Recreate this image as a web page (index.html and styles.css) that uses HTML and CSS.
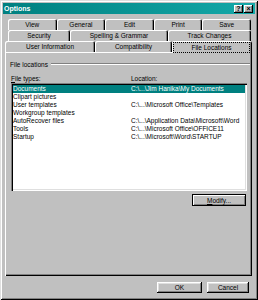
FILE: index.html
```html
<!DOCTYPE html>
<html lang="en">
<head>
  <meta charset="UTF-8">
  <meta name="viewport" content="width=device-width, initial-scale=1.0">
  <title>Options</title>
  <link rel="stylesheet" href="styles.css">
</head>
<body>

  <div class="window">
    <div class="titlebar">
      <span class="title">Options</span>
      <div class="title-buttons">
        <span class="tbtn">?</span>
        <span class="tbtn">×</span>
      </div>
    </div>

    <div class="content">
      <div class="tabs">
        <div class="tab-row back">
          <div class="tab">View</div>
          <div class="tab">General</div>
          <div class="tab">Edit</div>
          <div class="tab">Print</div>
          <div class="tab">Save</div>
        </div>
        <div class="tab-row back">
          <div class="tab w-security">Security</div>
          <div class="tab w-spelling">Spelling &amp; Grammar</div>
          <div class="tab w-track">Track Changes</div>
        </div>
        <div class="tab-row front">
          <div class="tab w-user">User Information</div>
          <div class="tab w-compat">Compatibility</div>
          <div class="tab w-files selected"><span class="focus">File Locations</span></div>
        </div>
      </div>

      <div class="panel">
        <div class="group">
          <span>File locations</span>
          <span class="etch"></span>
        </div>

        <div class="headers">
          <span class="col-type"><u>F</u>ile types:</span>
          <span class="col-loc">Location:</span>
        </div>

        <div class="listbox">
          <div class="row selected"><span class="col-type">Documents</span><span>C:\...\Jim Hanika\My Documents</span></div>
          <div class="row"><span class="col-type">Clipart pictures</span><span></span></div>
          <div class="row"><span class="col-type">User templates</span><span>C:\...\Microsoft Office\Templates</span></div>
          <div class="row"><span class="col-type">Workgroup templates</span><span></span></div>
          <div class="row"><span class="col-type">AutoRecover files</span><span>C:\...\Application Data\Microsoft\Word</span></div>
          <div class="row"><span class="col-type">Tools</span><span>C:\...\Microsoft Office\OFFICE11</span></div>
          <div class="row"><span class="col-type">Startup</span><span>C:\...\Microsoft\Word\STARTUP</span></div>
        </div>

        <div class="panel-actions">
          <button class="btn default modify"><u>M</u>odify...</button>
        </div>
      </div>

      <div class="footer">
        <button class="btn ok">OK</button>
        <button class="btn cancel">Cancel</button>
      </div>
    </div>
  </div>

</body>
</html>
```

FILE: styles.css
```css
* {
  box-sizing: border-box;
}

body {
  margin: 0;
  background: #c0c0c0;
  font-family: "Liberation Sans", Arial, sans-serif;
  font-size: 6.5px;
  color: #000;
}

.window {
  width: 258px;
  height: 300px;
  padding: 3px;
  display: flex;
  flex-direction: column;
  background: #c0c0c0;
  box-shadow: inset 1px 1px #dfdfdf, inset -1px -1px #000, inset 2px 2px #fff, inset -2px -2px #808080;
}

.titlebar {
  height: 11px;
  display: flex;
  align-items: center;
  justify-content: space-between;
  padding: 0 2px 0 1px;
  background: linear-gradient(to right, #008080, #14a8a8);
  color: #fff;
}

.title {
  font-weight: bold;
  font-size: 7px;
}

.title-buttons {
  display: flex;
  gap: 1px;
}

.tbtn {
  width: 9px;
  height: 8px;
  display: flex;
  align-items: center;
  justify-content: center;
  background: #c0c0c0;
  color: #000;
  font-size: 7px;
  font-weight: bold;
  line-height: 1;
  box-shadow: inset -1px -1px #000, inset 1px 1px #fff, inset -2px -2px #808080;
}

.content {
  flex: 1;
  display: flex;
  flex-direction: column;
  padding: 5px 3px 0 2px;
}

/* tabs */
.tab-row {
  display: flex;
  height: 11px;
}

.tab-row.back {
  margin: 0 1px 0 3px;
}

.tab {
  flex: 1;
  display: flex;
  align-items: center;
  justify-content: center;
  border-radius: 2px 2px 0 0;
  white-space: nowrap;
  box-shadow: inset 1px 1px #fff, inset -1px 0 #000, inset -2px 0 #808080;
}

.w-security { flex: 0 0 62px; }
.w-spelling { flex: 0 0 98px; }
.w-track { flex: 0 0 83px; }
.w-user { flex: 0 0 90px; }
.w-compat { flex: 0 0 77px; }
.w-files { flex: 0 0 80px; }

.tab.selected {
  position: relative;
  z-index: 1;
  height: 12px;
  margin-bottom: -1px;
  background: #c0c0c0;
  padding: 2px 3px 1px 2px;
}

.focus {
  flex: 1;
  align-self: stretch;
  display: flex;
  align-items: center;
  justify-content: center;
  outline: 1px dotted #000;
}

/* panel */
.panel {
  height: 224px;
  padding: 8px 2px 0 5px;
  box-shadow: inset 1px 1px #fff, inset -1px -1px #000, inset -2px -2px #808080;
}

.group {
  height: 8px;
  display: flex;
  align-items: center;
  gap: 3px;
}

.etch {
  flex: 1;
  height: 2px;
  border-top: 1px solid #808080;
  border-bottom: 1px solid #fff;
}

.headers {
  display: flex;
  height: 8px;
  margin: 7px 0 0 1px;
  line-height: 8px;
}

.col-type {
  flex: 0 0 120px;
}

.listbox {
  width: 236px;
  height: 108px;
  margin-left: 1px;
  padding: 2px;
  background: #fff;
  box-shadow: inset 1px 1px #808080, inset 2px 2px #000, inset -1px -1px #fff, inset -2px -2px #dfdfdf;
}

.row {
  display: flex;
  height: 8px;
  line-height: 8px;
  white-space: nowrap;
}

.row .col-type {
  flex: 0 0 118px;
}

.row.selected {
  background: #008080;
  color: #fff;
}

.panel-actions {
  width: 236px;
  margin: 3px 0 0 1px;
  display: flex;
  justify-content: flex-end;
  padding-right: 1px;
}

/* buttons */
.btn {
  font: inherit;
  color: #000;
  background: #c0c0c0;
  border: 0;
  padding: 0;
  box-shadow: inset -1px -1px #000, inset 1px 1px #fff, inset -2px -2px #808080, inset 2px 2px #dfdfdf;
}

.btn.default {
  box-shadow: inset 0 0 0 1px #000, inset 2px 2px #fff, inset -2px -2px #808080;
}

.modify {
  width: 54px;
  height: 12px;
}

.footer {
  display: flex;
  justify-content: flex-end;
  gap: 5px;
  padding: 6px 3px 0 0;
}

.ok {
  width: 45px;
  height: 11px;
}

.cancel {
  width: 42px;
  height: 11px;
}
```
